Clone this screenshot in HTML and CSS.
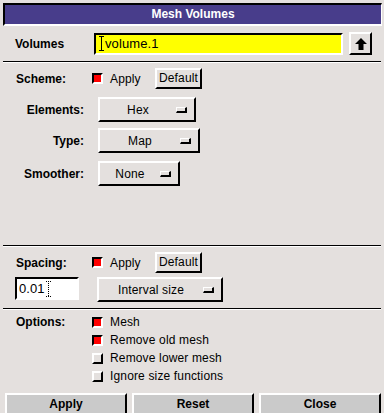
FILE: index.html
```html
<!DOCTYPE html>
<html lang="en">
<head>
    <meta charset="UTF-8">
    <title>Mesh Volumes</title>
    <link rel="stylesheet" href="styles.css">
</head>
<body>
<div class="window">

    <div class="title">Mesh Volumes</div>

    <!-- Volume selection -->
    <div class="volumes-row">
        <span class="label">Volumes</span>
        <div class="field field-yellow">
            <svg class="ibeam" width="5" height="15" viewBox="0 0 5 15">
                <path d="M0 0.5H5M0 14.5H5M2.5 0V15" stroke="#000" stroke-width="1" fill="none"/>
            </svg>
            <span>volume.1</span>
        </div>
        <div class="up-button">
            <svg width="12" height="12" viewBox="0 0 12 12">
                <polygon points="6,0 12,6 8.5,6 8.5,12 3.5,12 3.5,6 0,6" fill="#000"/>
            </svg>
        </div>
    </div>
    <div class="sep"></div>

    <!-- Scheme -->
    <div class="section scheme">
        <div class="apply-row">
            <span class="label">Scheme:</span>
            <span class="check on"></span>
            <span class="check-text">Apply</span>
            <div class="button default-button">Default</div>
        </div>
        <div class="menu-row row-elements">
            <span class="menu-label">Elements:</span>
            <div class="button menu w-elements"><span class="menu-text">Hex</span><span class="indicator"></span></div>
        </div>
        <div class="menu-row row-type">
            <span class="menu-label">Type:</span>
            <div class="button menu w-type"><span class="menu-text">Map</span><span class="indicator"></span></div>
        </div>
        <div class="menu-row row-smoother">
            <span class="menu-label">Smoother:</span>
            <div class="button menu w-smoother"><span class="menu-text">None</span><span class="indicator"></span></div>
        </div>
    </div>
    <div class="sep"></div>

    <!-- Spacing -->
    <div class="section spacing">
        <div class="apply-row">
            <span class="label">Spacing:</span>
            <span class="check on"></span>
            <span class="check-text">Apply</span>
            <div class="button default-button">Default</div>
        </div>
        <div class="spacing-row">
            <div class="field field-white">
                <span>0.01</span>
                <svg class="ibeam" width="5" height="16" viewBox="0 0 5 16">
                    <path d="M0 0.5H5M0 15.5H5M2.5 0V16" stroke="#000" stroke-width="1" stroke-dasharray="1 1" fill="none"/>
                </svg>
            </div>
            <div class="button menu w-interval"><span class="menu-text">Interval size</span><span class="indicator"></span></div>
        </div>
    </div>
    <div class="sep"></div>

    <!-- Options -->
    <div class="section options">
        <div class="option-row">
            <span class="label">Options:</span>
            <span class="check on"></span>
            <span class="check-text">Mesh</span>
        </div>
        <div class="option-row">
            <span class="label"></span>
            <span class="check on"></span>
            <span class="check-text">Remove old mesh</span>
        </div>
        <div class="option-row">
            <span class="label"></span>
            <span class="check"></span>
            <span class="check-text">Remove lower mesh</span>
        </div>
        <div class="option-row">
            <span class="label"></span>
            <span class="check"></span>
            <span class="check-text">Ignore size functions</span>
        </div>
    </div>

    <!-- Dialog buttons -->
    <div class="actions">
        <div class="action">Apply</div>
        <div class="action">Reset</div>
        <div class="action">Close</div>
    </div>

</div>
</body>
</html>
```

FILE: styles.css
```css
* {
    box-sizing: border-box;
}

body {
    margin: 0;
    font-family: 'Liberation Sans', Arial, sans-serif;
    font-size: 12px;
    color: #000;
    background-color: #e4e0de;
}

.window {
    width: 384px;
    height: 413px;
    overflow: hidden;
    display: flex;
    flex-direction: column;
}

.window > * {
    flex-shrink: 0;
}

.title {
    margin: 3px 2px 0 3px;
    height: 23px;
    border-style: solid;
    border-width: 2px 1px 2px 2px;
    border-color: #000 #fff #fff #000;
    background-color: #483d8b;
    color: #fff;
    font-weight: bold;
    text-align: center;
    line-height: 19px;
}

.label {
    font-weight: bold;
}

/* Volumes row */
.volumes-row {
    height: 35px;
    display: flex;
    align-items: center;
    padding-left: 15px;
}

.volumes-row .label {
    width: 79px;
}

.field {
    display: flex;
    align-items: center;
    border-style: solid;
    border-width: 2px;
    border-color: #000 #fff #fff #000;
    font-size: 13px;
    letter-spacing: 0.1px;
}

.field-yellow {
    width: 249px;
    height: 22px;
    padding-left: 3px;
    background-color: #ffff00;
}

.field-yellow .ibeam {
    margin-right: 1px;
}

.field-white {
    width: 64px;
    height: 23px;
    padding-left: 2px;
    background-color: #fff;
    margin-left: 15px;
}

.field-white .ibeam {
    margin-left: 1px;
}

.up-button {
    margin-left: 6px;
    width: 23px;
    height: 23px;
    display: flex;
    align-items: center;
    justify-content: center;
    border-style: solid;
    border-width: 2px;
    border-color: #fff #000 #000 #fff;
}

.sep {
    margin: 0 3px;
    border-top: 1px solid #000;
    border-bottom: 1px solid #fff;
}

/* Sections */
.scheme {
    height: 182px;
    padding-top: 5px;
}

.spacing {
    height: 61px;
    padding-top: 5px;
}

.options {
    padding-top: 3px;
}

.apply-row, .option-row {
    display: flex;
    align-items: center;
    padding-left: 16px;
}

.apply-row {
    height: 21px;
}

.option-row {
    height: 18px;
}

.apply-row .label, .option-row .label {
    width: 76px;
}

.check {
    width: 11px;
    height: 11px;
    border-style: solid;
    border-width: 2px;
    border-color: #fff #000 #000 #fff;
}

.check.on {
    border-color: #000 #fff #fff #000;
    background-color: #ff0000;
}

.check-text {
    margin-left: 7px;
    letter-spacing: 0.15px;
}

.apply-row .check-text {
    width: 45px;
}

.button {
    border-style: solid;
    border-width: 2px;
    border-color: #fff #000 #000 #fff;
    letter-spacing: 0.15px;
}

.default-button {
    width: 47px;
    height: 21px;
    text-align: center;
    line-height: 17px;
}

/* Option menus */
.menu-row {
    display: flex;
    align-items: center;
}

.menu-label {
    width: 84px;
    text-align: right;
    font-weight: bold;
}

.menu-row .menu {
    margin-left: 14px;
}

.row-elements {
    margin-top: 8px;
}

.row-type {
    margin-top: 6px;
}

.row-smoother {
    margin-top: 8px;
}

.menu {
    height: 25px;
    display: flex;
    align-items: center;
}

.menu-text {
    flex: 1;
    text-align: center;
}

.indicator {
    width: 11px;
    height: 6px;
    margin-right: 7px;
    border-style: solid;
    border-width: 1px 2px 2px 1px;
    border-color: #fff #000 #000 #fff;
}

.w-elements { width: 98px; }
.w-type { width: 102px; }
.w-smoother { width: 82px; }
.w-interval { width: 126px; margin-left: 18px; }

.spacing-row {
    display: flex;
    align-items: flex-start;
    margin-top: 4px;
}

/* Bottom buttons */
.actions {
    display: flex;
    gap: 5px;
    padding-left: 5px;
    margin-top: 8px;
}

.action {
    width: 122px;
    height: 22px;
    border-style: solid;
    border-width: 2px;
    border-color: #fff #000 #000 #fff;
    background-color: #cacaca;
    font-weight: bold;
    text-align: center;
    line-height: 18px;
}
```
